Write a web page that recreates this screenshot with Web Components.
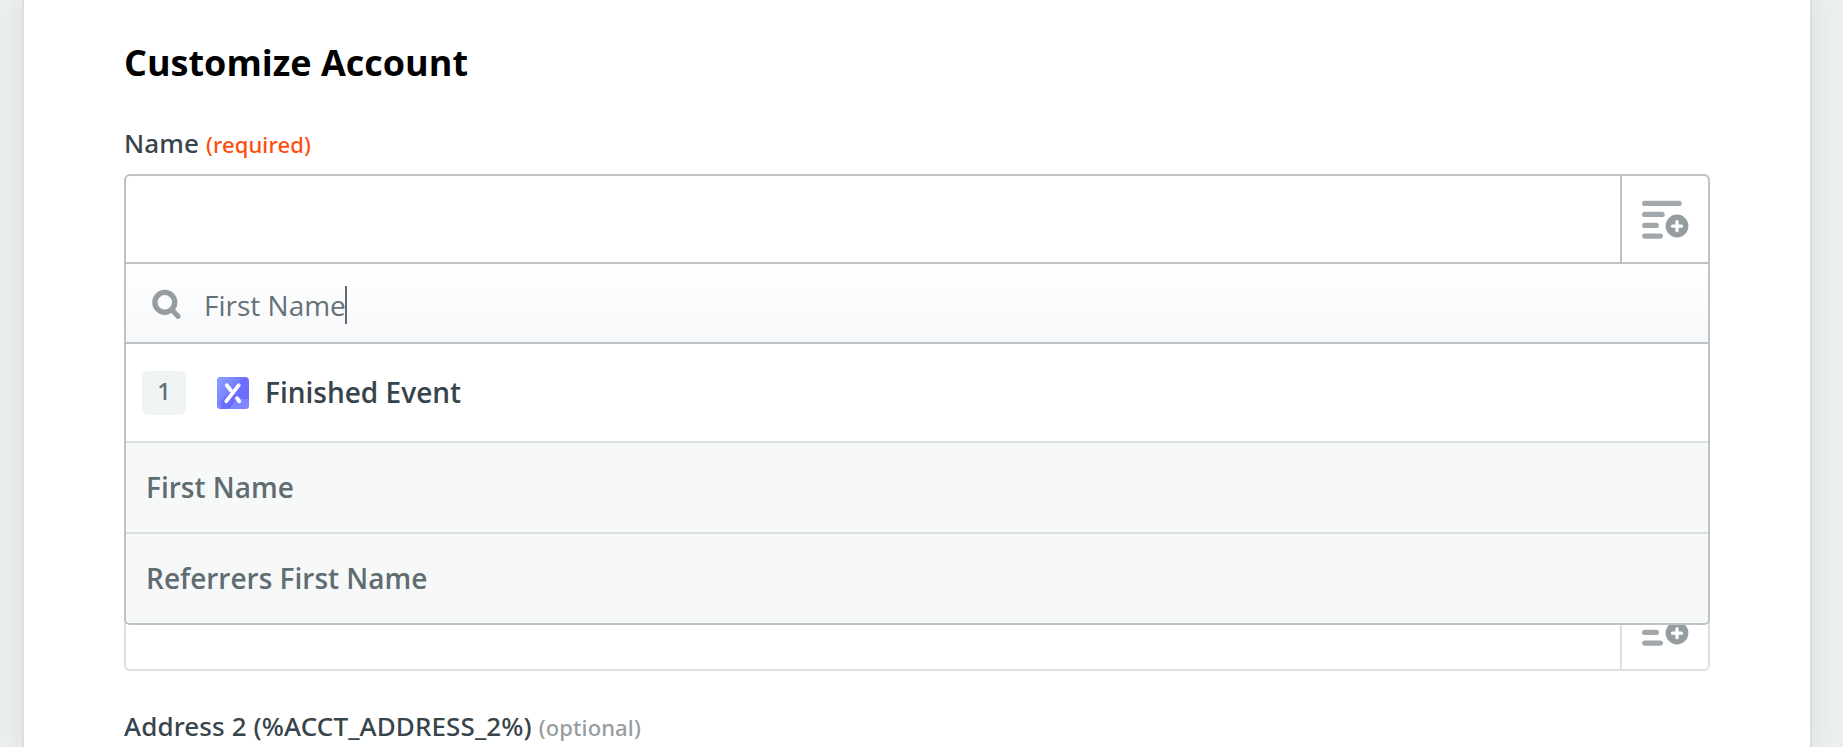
<!DOCTYPE html>
<html lang="en">
<head>
<meta charset="utf-8">
<title>Customize Account</title>
<style>
  html, body {
    height: 100%;
  }

  body {
    margin: 0;
    overflow: hidden;
    background: #ebeff0;
    font-family: "Open Sans", "Noto Sans", sans-serif;
    color: #37444b;
  }
</style>
</head>
<body>
<setup-card heading="Customize Account">
  <form-field label="Name" note="required" active>
    <field-menu slot="menu" query="First Name">
      <menu-step number="1">Finished Event</menu-step>
      <menu-option>First Name</menu-option>
      <menu-option>Referrers First Name</menu-option>
    </field-menu>
  </form-field>
  <form-field class="covered"></form-field>
  <form-field label="Address 2 (%ACCT_ADDRESS_2%)" note="optional" bare></form-field>
</setup-card>

<script>
class SetupCard extends HTMLElement {
  constructor() {
    super();
    this.attachShadow({ mode: "open" });
  }

  connectedCallback() {
    this.shadowRoot.innerHTML = `
      <style>
        :host {
          display: block;
          box-sizing: border-box;
          height: 100%;
          margin: 0 31px 0 22px;
          padding: 38px 100px 0;
          border: solid #dadfe2;
          border-width: 0 2px;
          background: #fff;
          box-shadow: 0 0 24px rgba(90, 30, 40, 0.09);
        }

        h2 {
          margin: 0 0 37px;
          font-size: 36px;
          font-weight: 700;
          line-height: 50px;
          color: #000;
        }

        /* the middle field sits mostly under the open menu */
        ::slotted(.covered) {
          margin-top: 317px;
          margin-bottom: 37px;
        }
      </style>
      <h2>${this.getAttribute("heading")}</h2>
      <slot></slot>
    `;
  }
}

class InsertIcon extends HTMLElement {
  constructor() {
    super();
    this.attachShadow({ mode: "open" });
    this.shadowRoot.innerHTML = `
      <style>
        :host {
          display: block;
          width: 48px;
          height: 40px;
        }

        svg {
          display: block;
        }
      </style>
      <svg width="48" height="40" viewBox="0 0 48 40" fill="none" stroke-linecap="round">
        <path d="M3.8 4.4H38M3.8 15.4H21M3.8 26.4H15.2M3.8 37.1H19.3" stroke="#a0a8ab" stroke-width="5.4"/>
        <circle cx="36" cy="27" r="11.4" fill="#959da0"/>
        <path d="M36 22.7V31.7M31.5 27.2H40.5" stroke="#fff" stroke-width="3.2"/>
      </svg>
    `;
  }
}

class FormField extends HTMLElement {
  constructor() {
    super();
    this.attachShadow({ mode: "open" });
  }

  connectedCallback() {
    const label = this.getAttribute("label");
    const note = this.getAttribute("note");

    this.shadowRoot.innerHTML = `
      <style>
        :host {
          --line: #dadfe2;
          display: block;
          position: relative;
        }

        :host([active]) {
          --line: #bdc2c6;
          z-index: 1;
        }

        .label {
          margin-bottom: 13px;
          font-family: "Noto Sans", "Open Sans", sans-serif;
          font-size: 26px;
          font-weight: 500;
          line-height: 36px;
          letter-spacing: 0.12px;
          white-space: nowrap;
        }

        .note {
          font-size: 22px;
          line-height: 1;
        }

        .required {
          color: #ff4f0f;
        }

        .optional {
          color: #959da0;
        }

        .box {
          display: flex;
          box-sizing: border-box;
          height: 90px;
          border: 2px solid var(--line);
          border-radius: 6px;
          background: #fff;
        }

        :host([active]) .box {
          border-radius: 6px 6px 0 0;
        }

        :host([bare]) .label {
          margin-bottom: 0;
        }

        :host([bare]) .box {
          display: none;
        }

        .input {
          flex: 1;
        }

        .insert {
          display: flex;
          align-items: center;
          justify-content: center;
          width: 86px;
          border-left: 2px solid var(--line);
        }

        ::slotted(field-menu) {
          position: absolute;
          top: 100%;
          left: 0;
          right: 0;
        }
      </style>
      ${label ? `<div class="label">${label} <span class="note ${note}">(${note})</span></div>` : ""}
      <div class="box">
        <div class="input"></div>
        <div class="insert"><insert-icon></insert-icon></div>
      </div>
      <slot name="menu"></slot>
    `;
  }
}

class FieldMenu extends HTMLElement {
  constructor() {
    super();
    this.attachShadow({ mode: "open" });
  }

  connectedCallback() {
    this.shadowRoot.innerHTML = `
      <style>
        :host {
          display: block;
          overflow: hidden;
          border: 2px solid #bdc2c6;
          border-top: 0;
          border-radius: 0 0 6px 6px;
          background: #fff;
        }

        .search {
          display: flex;
          align-items: center;
          height: 78px;
          padding-left: 24px;
          border-bottom: 2px solid #bdc2c6;
          background: linear-gradient(#fff, #f7f8fa);
        }

        .search svg {
          margin-right: 22px;
          padding-top: 1px;
        }

        .query {
          font-size: 28px;
          line-height: 38px;
          padding-top: 4px;
          color: #647177;
        }

        .caret {
          width: 2px;
          height: 38px;
          margin: 4px 0 0 -1px;
          background: #5f6d73;
        }
      </style>
      <div class="search">
        <svg width="32" height="32" viewBox="0 0 32 32" fill="none" stroke="#959da0">
          <circle cx="14.8" cy="14.3" r="9.9" stroke-width="5.4"/>
          <path d="M21.5 21.5L28 28.3" stroke-width="5.2" stroke-linecap="round"/>
        </svg>
        <span class="query">${this.getAttribute("query")}</span>
        <span class="caret"></span>
      </div>
      <slot></slot>
    `;
  }
}

class MenuStep extends HTMLElement {
  constructor() {
    super();
    this.attachShadow({ mode: "open" });
  }

  connectedCallback() {
    this.shadowRoot.innerHTML = `
      <style>
        :host {
          display: flex;
          align-items: center;
          height: 97px;
          padding-left: 16px;
          font-size: 28px;
          font-weight: 600;
          line-height: 38px;
        }

        .number {
          width: 44px;
          margin-right: 31px;
          border-radius: 6px;
          background: #f0f4f5;
          font-family: "Noto Sans", "Open Sans", sans-serif;
          font-size: 24px;
          font-weight: 500;
          line-height: 40px;
          padding-bottom: 4px;
          text-align: center;
          color: #5f6d73;
        }

        svg {
          margin-right: 16px;
        }

        .title {
          margin-top: -1px;
        }
      </style>
      <span class="number">${this.getAttribute("number")}</span>
      <svg width="32" height="32" viewBox="0 0 32 32">
        <defs>
          <clipPath id="tile"><rect width="32" height="32" rx="4"/></clipPath>
          <linearGradient id="shine" x1="0" y1="0" x2="1" y2="0.6">
            <stop offset="0" stop-color="#8aa0ff"/>
            <stop offset="0.75" stop-color="#7379ff"/>
          </linearGradient>
        </defs>
        <g clip-path="url(#tile)">
          <path fill="#6c6cff" d="M0 0H32V32H0Z"/>
          <path fill="url(#shine)" d="M0 0H27L0 28Z"/>
          <path fill="#7b86ff" d="M12 32L20 22H32V32Z"/>
          <path fill="#7b86ff" d="M0 27L4 25V32H0Z"/>
        </g>
        <path d="M21.8 8.2L9.3 24.2M9.8 8.2L15.7 15.6M20 21.3L22.3 24.2" fill="none" stroke="#fff" stroke-width="3.8" stroke-linecap="round"/>
      </svg>
      <span class="title"><slot></slot></span>
    `;
  }
}

class MenuOption extends HTMLElement {
  constructor() {
    super();
    this.attachShadow({ mode: "open" });
    this.shadowRoot.innerHTML = `
      <style>
        :host {
          display: flex;
          align-items: center;
          height: 89px;
          padding-left: 20px;
          border-top: 2px solid #dadfe2;
          background: #f7f9f9;
          font-size: 28px;
          font-weight: 600;
          line-height: 38px;
          color: #5f6d73;
        }

        span {
          margin-top: -1px;
        }
      </style>
      <span><slot></slot></span>
    `;
  }
}

customElements.define("insert-icon", InsertIcon);
customElements.define("menu-step", MenuStep);
customElements.define("menu-option", MenuOption);
customElements.define("field-menu", FieldMenu);
customElements.define("form-field", FormField);
customElements.define("setup-card", SetupCard);
</script>
</body>
</html>
